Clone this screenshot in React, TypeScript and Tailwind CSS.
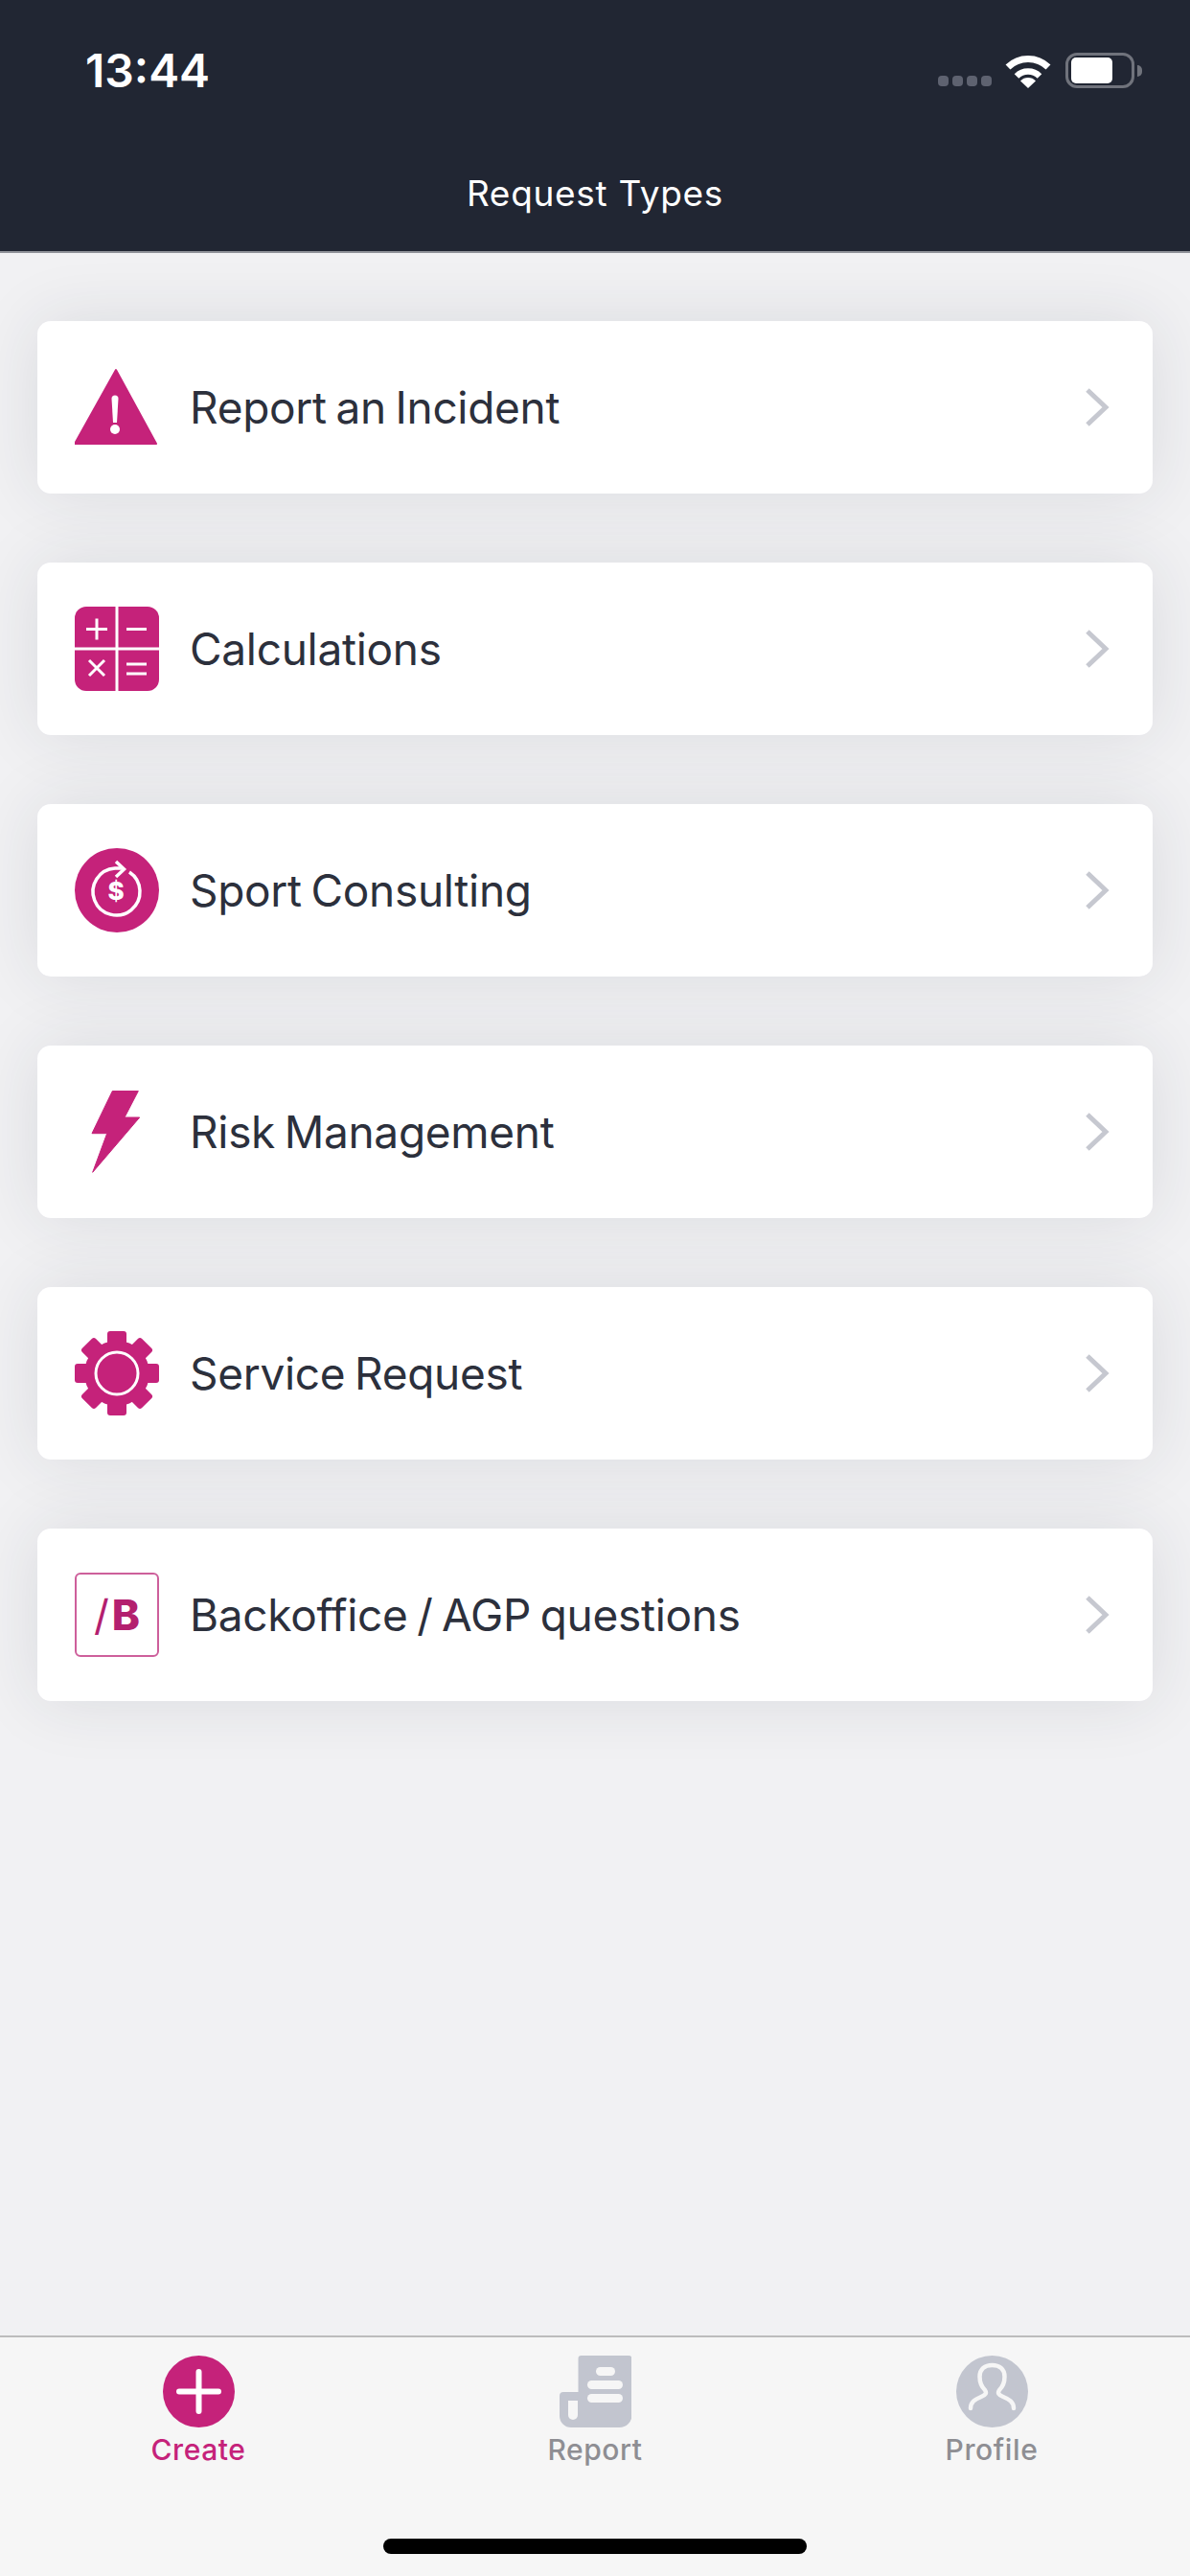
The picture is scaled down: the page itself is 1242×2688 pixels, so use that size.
import type { ReactNode } from 'react';

function Svg({ size = 88, children }: { size?: number; children: ReactNode }) {
  return (
    <svg width={size} height={size} viewBox={`0 0 ${size} ${size}`} className="shrink-0" aria-hidden="true">
      {children}
    </svg>
  );
}

const PINK = '#c5227a';

function WarningIcon() {
  return (
    <Svg>
      <path d="M43 5 L85 82 H0 Z" fill={PINK} stroke={PINK} strokeWidth="2" strokeLinejoin="round" />
      <path d="M38.5 35 A3.5 3.5 0 0 1 45.5 35 L44 60 H40 Z" fill="#fff" />
      <circle cx="42" cy="67" r="5" fill="#fff" />
    </Svg>
  );
}

function CalcIcon() {
  return (
    <Svg>
      <rect x="0" y="0" width="88" height="88" rx="12" fill={PINK} />
      <path d="M44 0 V88 M0 44 H88" stroke="#fff" strokeWidth="3" />
      <path
        d="M12 23.5 H34 M23 12.5 V34.5 M54 23.5 H75 M15 56 L31 72 M31 56 L15 72 M54 60 H75 M54 70 H75"
        stroke="#fff"
        strokeWidth="3"
        fill="none"
      />
    </Svg>
  );
}

function ConsultIcon() {
  return (
    <Svg>
      <circle cx="44" cy="44" r="44" fill={PINK} />
      <path d="M57 25 A24.5 24.5 0 1 1 42 21 H51" stroke="#fff" strokeWidth="3.5" fill="none" />
      <path d="M43 14 L51.5 22 L43 30" stroke="#fff" strokeWidth="3.5" fill="none" />
      <text x="43" y="54" textAnchor="middle" fill="#fff" fontSize="26" fontWeight="800" fontFamily="Inter, sans-serif">
        $
      </text>
    </Svg>
  );
}

function BoltIcon() {
  return (
    <Svg>
      <path
        d="M39.3 1.5 H66.3 L52 29 H67.7 L18.7 86.3 L33.7 45.7 H18 Z"
        fill={PINK}
        stroke={PINK}
        strokeWidth="1"
        strokeLinejoin="round"
      />
    </Svg>
  );
}

function GearIcon() {
  return (
    <Svg>
      <circle cx="44" cy="44" r="34" fill={PINK} />
      {[0, 45, 90, 135, 180, 225, 270, 315].map((a) => (
        <rect key={a} x="34" y="0" width="20" height="18" rx="3" fill={PINK} transform={`rotate(${a} 44 44)`} />
      ))}
      <circle cx="44" cy="44" r="22" fill={PINK} stroke="#fff" strokeWidth="3" />
    </Svg>
  );
}

function BackofficeIcon() {
  return (
    <div className="flex h-[88px] w-[88px] shrink-0 items-center justify-center rounded-[6px] border-2 border-[#cd5f9b] font-['Inter',sans-serif] text-[44px] leading-none text-[#b3206f]">
      <span className="font-normal">/</span>
      <span className="ml-[3px] font-extrabold">B</span>
    </div>
  );
}

function Chevron() {
  return (
    <svg width="28" height="42" viewBox="0 0 28 42" className="shrink-0" aria-hidden="true">
      <path d="M3 3 L22 21 L3 39" stroke="#c6c8d0" strokeWidth="5" fill="none" />
    </svg>
  );
}

function RequestCard({ icon, label }: { icon: ReactNode; label: string }) {
  return (
    <div className="flex h-[180px] items-center rounded-[14px] bg-white pl-[39px] pr-[43px] shadow-[0_0_70px_rgba(40,44,60,0.11)]">
      {icon}
      <span className="ml-[32px] flex-1 font-['Inter',sans-serif] text-[46px] leading-none tracking-[-0.3px] [word-spacing:-3px] text-[#2c303c]">
        {label}
      </span>
      <Chevron />
    </div>
  );
}

function StatusBar() {
  return (
    <div className="flex h-[37px] items-center justify-between pl-[89px] pr-[50px] mt-[55px]">
      <span className="font-['Inter',sans-serif] text-[48px] font-semibold leading-none text-white">13:44</span>
      <div className="flex items-center">
        <div className="mt-[22px] flex gap-[4px]">
          {[0, 1, 2, 3].map((i) => (
            <div key={i} className="h-[11px] w-[11px] rounded-[4px] bg-[#5e6270]" />
          ))}
        </div>
        <svg width="50" height="36" viewBox="0 0 50 36" className="ml-[13px]" aria-hidden="true">
          <path d="M4 14 A30 30 0 0 1 46 14" stroke="#fff" strokeWidth="7" fill="none" />
          <path d="M13 23.5 A17 17 0 0 1 37 23.5" stroke="#fff" strokeWidth="6.5" fill="none" />
          <path d="M25 36 L17 28.5 A11 11 0 0 1 33 28.5 Z" fill="#fff" />
        </svg>
        <div className="ml-[14px] flex h-[37px] w-[72px] items-center rounded-[12px] border-[3px] border-[#70737c] p-[3px]">
          <div className="h-[27px] w-[43px] rounded-[5px] bg-white" />
        </div>
        <div className="ml-[3px] h-[12px] w-[5px] rounded-r-full bg-[#70737c]" />
      </div>
    </div>
  );
}

function PlusIcon() {
  return (
    <svg width="75" height="75" viewBox="0 0 75 75" aria-hidden="true">
      <circle cx="37.5" cy="37.5" r="37.5" fill={PINK} />
      <path d="M37.5 17 V58 M17 37.5 H58" stroke="#fff" strokeWidth="6" strokeLinecap="round" />
    </svg>
  );
}

function ReportIcon() {
  return (
    <svg width="75" height="75" viewBox="0 0 75 75" aria-hidden="true">
      <path
        d="M22.5 0 H72 A3.5 3.5 0 0 1 75.5 3.5 V62 A13 13 0 0 1 62.5 75 H12 A12 12 0 0 1 0 63 V42 A4 4 0 0 1 4 38 H19.5 V3 A3 3 0 0 1 22.5 0 Z"
        fill="#c2c5cf"
      />
      <rect x="38" y="12" width="20" height="9" rx="4.5" fill="#f6f6f6" />
      <rect x="29" y="26" width="37" height="9" rx="4.5" fill="#f6f6f6" />
      <rect x="29" y="40" width="37" height="9" rx="4.5" fill="#f6f6f6" />
      <path d="M9 47 H19 V62 A5 5 0 0 1 9 62 Z" fill="#f6f6f6" />
    </svg>
  );
}

function ProfileIcon() {
  return (
    <svg width="75" height="75" viewBox="0 0 75 75" aria-hidden="true">
      <circle cx="37.5" cy="37.5" r="37.5" fill="#c2c5cf" />
      <path
        d="M15 55 C15 48 20 45.5 26 43 C31 41 32 39 30 36 C26 32 24.5 27 24.5 22 C24.5 14 30 10 37.5 10 C45 10 50.5 14 50.5 22 C50.5 27 49 32 45 36 C43 39 44 41 49 43 C55 45.5 60 48 60 55"
        stroke="#f6f6f6"
        strokeWidth="4.5"
        strokeLinecap="round"
        fill="none"
      />
    </svg>
  );
}

function Tab({ icon, label, active }: { icon: ReactNode; label: string; active?: boolean }) {
  return (
    <div className="flex flex-col items-center">
      {icon}
      <span
        className={`mt-[5px] font-['Inter',sans-serif] text-[30px] font-medium leading-[36px] tracking-[0.6px] ${
          active ? 'text-[#c5227a]' : 'text-[#8e8e93]'
        }`}
      >
        {label}
      </span>
    </div>
  );
}

export default function App() {
  const items = [
    { icon: <WarningIcon />, label: 'Report an Incident' },
    { icon: <CalcIcon />, label: 'Calculations' },
    { icon: <ConsultIcon />, label: 'Sport Consulting' },
    { icon: <BoltIcon />, label: 'Risk Management' },
    { icon: <GearIcon />, label: 'Service Request' },
    { icon: <BackofficeIcon />, label: 'Backoffice / AGP questions' },
  ];

  return (
    <div className="flex h-[2688px] w-[1242px] flex-col overflow-hidden bg-[#f1f1f3]">
      {/* Header */}
      <header className="h-[264px] shrink-0 border-b-2 border-[#8f9198] bg-[#212633]">
        <StatusBar />
        <h1 className="mt-[88px] text-center font-['Inter',sans-serif] text-[37px] font-normal leading-[44px] tracking-[0.7px] text-white">
          Request Types
        </h1>
      </header>

      {/* Cards */}
      <main className="flex flex-1 flex-col gap-[72px] px-[39px] pt-[71px]">
        {items.map((item) => (
          <RequestCard key={item.label} icon={item.icon} label={item.label} />
        ))}
      </main>

      {/* Tab bar */}
      <footer className="flex h-[251px] shrink-0 flex-col border-t-[2px] border-[#bcbcbc] bg-[#f6f6f6]">
        <div className="mt-[19px] grid grid-cols-3">
          <Tab icon={<PlusIcon />} label="Create" active />
          <Tab icon={<ReportIcon />} label="Report" />
          <Tab icon={<ProfileIcon />} label="Profile" />
        </div>
        <div className="mx-auto mt-[75px] h-[16px] w-[442px] rounded-full bg-black" />
      </footer>
    </div>
  );
}
